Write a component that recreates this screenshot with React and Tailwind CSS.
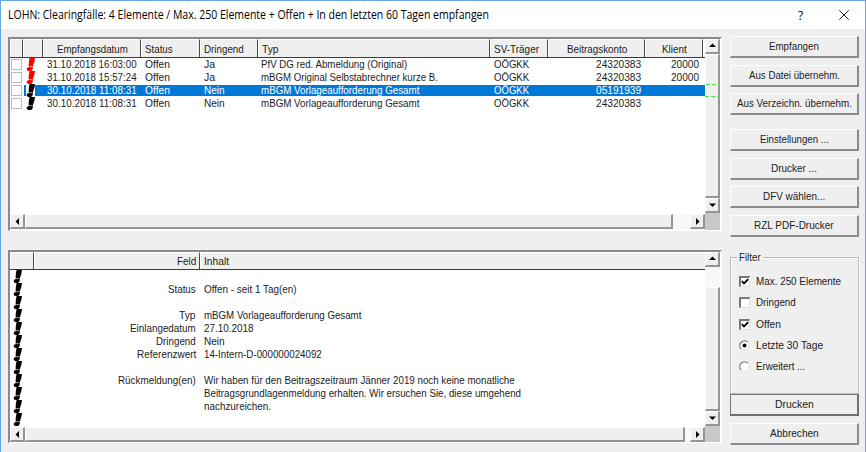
import { useLayoutEffect, useRef } from "react";

// Text run condensed (or widened) so that it fills the given width.
function T({ w, className = "", children }) {
  const ref = useRef(null);
  useLayoutEffect(() => {
    const el = ref.current;
    el.parentElement.style.width = w + "px";
    el.style.transform = `scaleX(${w / el.offsetWidth})`;
  }, [w]);
  return (
    <span className={`inline-flex ${className}`}>
      <span ref={ref} className="shrink-0 origin-left whitespace-pre">
        {children}
      </span>
    </span>
  );
}

const raised =
  "border-t border-l border-t-white border-l-white border-r-2 border-b-2 border-r-[#959595] border-b-[#959595] bg-[#efefef]";

const arrows = {
  up: "M4 8h7L7.5 4.5z",
  down: "M4 5.5h7L7.5 9z",
  left: "M9 4v7L5.5 7.5z",
  right: "M6 4v7L9.5 7.5z",
};

function Arrow({ dir }) {
  return (
    <div className={`h-[15px] w-[15px] shrink-0 ${raised}`}>
      <svg viewBox="0 0 15 15" className="-mt-px -ml-px block h-[15px] w-[15px]">
        <path d={arrows[dir]} fill="#000" />
      </svg>
    </div>
  );
}

function Mark({ color = "#000" }) {
  return (
    <svg viewBox="0 0 10 13" className="block h-[13px] w-[10px] shrink-0 overflow-visible">
      <path d="M3.6 0H9L8.4 3.5L6.8 8.6H2.6L2.8 4Z" fill={color} />
      <ellipse cx="3.6" cy="11" rx="2.9" ry="2" fill={color} />
      <path d="M4.5 9.6L6.8 8.6V11Z" fill={color} />
    </svg>
  );
}

function Head({ className = "", children }) {
  return (
    <div
      className={`flex h-full shrink-0 items-center border-t border-r border-l border-t-white border-l-white border-r-[#4a4a4a] bg-[#efefef] pt-px ${className}`}
    >
      {children}
    </div>
  );
}

const messages = [
  { date: "31.10.2018 16:03:00", dw: 90, status: "Offen", urgent: "Ja", uw: 11, type: "PfV DG red. Abmeldung (Original)", tw: 146, konto: "24320383", klient: "20000", color: "#f00" },
  { date: "31.10.2018 15:57:24", dw: 90, status: "Offen", urgent: "Ja", uw: 11, type: "mBGM Original Selbstabrechner kurze B.", tw: 177, konto: "24320383", klient: "20000", color: "#f00" },
  { date: "30.10.2018 11:08:31", dw: 90, status: "Offen", urgent: "Nein", uw: 21, type: "mBGM Vorlageaufforderung Gesamt", tw: 158, konto: "05191939", klient: "", color: "#000", selected: true },
  { date: "30.10.2018 11:08:31", dw: 90, status: "Offen", urgent: "Nein", uw: 21, type: "mBGM Vorlageaufforderung Gesamt", tw: 158, konto: "24320383", klient: "", color: "#000" },
];

function MessageRow({ m }) {
  return (
    <div className="flex h-[13px] w-[695px] items-center">
      <div className="ml-px h-[11px] w-[11px] shrink-0 border border-[#bdbdbd] bg-white" />
      <div className={`ml-[2px] flex h-[11px] flex-1 items-center ${m.selected ? "bg-[#0078d7] text-white" : ""}`}>
        <div className={`ml-[2px] flex h-[11px] w-[9px] shrink-0 items-center justify-start ${m.selected ? "bg-white" : ""}`}>
          <Mark color={m.color} />
        </div>
        <div className="ml-[12px] flex w-[90px] shrink-0 items-center"><T w={m.dw}>{m.date}</T></div>
        <div className="ml-[8px] flex w-[59px] shrink-0"><T w={25}>{m.status}</T></div>
        <div className="flex w-[57px] shrink-0"><T w={m.uw}>{m.urgent}</T></div>
        <div className="flex w-[233px] shrink-0"><T w={m.tw}>{m.type}</T></div>
        <div className="flex w-[57px] shrink-0"><T w={35}>OÖGKK</T></div>
        <div className="flex w-[90px] shrink-0 justify-end"><T w={45}>{m.konto}</T></div>
        <div className="flex w-[58px] shrink-0 justify-end">{m.klient && <T w={28}>{m.klient}</T>}</div>
      </div>
    </div>
  );
}

function Messages() {
  return (
    <div className="relative flex h-[194px] w-[714px] border-t-2 border-r-2 border-b border-l-2 border-t-[#8a8a8a] border-r-white border-b-white border-l-[#8a8a8a] bg-white">
      <div className="flex w-[695px] flex-col">
        <div className="flex h-[19px] border-b border-[#3c3c3c]">
          <Head className="w-[13px]" />
          <Head className="w-[20px]" />
          <Head className="w-[98px] justify-center"><T w={71}>Empfangsdatum</T></Head>
          <Head className="w-[59px] pl-[3px]"><T w={28}>Status</T></Head>
          <Head className="w-[58px] pl-[3px]"><T w={40}>Dringend</T></Head>
          <Head className="w-[232px] pl-[3px]"><T w={17}>Typ</T></Head>
          <Head className="w-[58px] pl-[3px]"><T w={45}>SV-Träger</T></Head>
          <Head className="w-[97px] justify-center"><T w={60}>Beitragskonto</T></Head>
          <Head className="w-[58px] justify-center"><T w={25}>Klient</T></Head>
        </div>
        <div className="h-[156px]">
          {messages.map((m, i) => <MessageRow key={i} m={m} />)}
        </div>
        <div className="flex h-[16px] bg-[#f8f8f8]">
          <Arrow dir="left" />
          <div className={`h-[15px] w-[648px] ${raised}`} />
          <div className="flex-1" />
          <Arrow dir="right" />
        </div>
      </div>
      <div className="flex w-[15px] flex-col bg-[#f8f8f8]">
        <Arrow dir="up" />
        <div className={`h-[144px] w-[15px] ${raised}`} />
        <Arrow dir="down" />
        <div className="flex-1 bg-[#c8c8c8]" />
      </div>
      <svg viewBox="0 0 15 13" className="absolute top-[45px] left-[695px] h-[13px] w-[15px]">
        <path d="M1 0.5H15M0 12.5H15" stroke="#4be84b" strokeDasharray="4 2" fill="none" />
      </svg>
    </div>
  );
}

const details = [
  ["", 0, "", 0],
  ["Status", 28, "Offen - seit 1 Tag(en)", 93],
  ["", 0, "", 0],
  ["Typ", 17, "mBGM Vorlageaufforderung Gesamt", 157],
  ["Einlangedatum", 66, "27.10.2018", 50],
  ["Dringend", 40, "Nein", 21],
  ["Referenzwert", 59, "14-Intern-D-000000024092", 118],
  ["", 0, "", 0],
  ["Rückmeldung(en)", 78, "Wir haben für den Beitragszeitraum Jänner 2019 noch keine monatliche", 311],
  ["", 0, "Beitragsgrundlagenmeldung erhalten. Wir ersuchen Sie, diese umgehend", 317],
  ["", 0, "nachzureichen.", 67],
  ["", 0, "", 0],
];

function Details() {
  return (
    <div className="flex h-[193px] w-[714px] border-t-2 border-r-2 border-b border-l-2 border-t-[#8a8a8a] border-r-white border-b-white border-l-[#8a8a8a] bg-white">
      <div className="flex w-[695px] flex-col">
        <div className="flex h-[18px] border-b border-[#3c3c3c]">
          <Head className="w-[24px]" />
          <Head className="w-[166px] justify-end pr-[3px]"><T w={19}>Feld</T></Head>
          <Head className="flex-1 border-r-0 pl-[3px]"><T w={25}>Inhalt</T></Head>
        </div>
        <div className="h-[157px]">
          {details.map(([label, lw, value, vw], i) => (
            <div key={i} className="flex h-[13px] items-center">
              <div className="ml-[3px] w-[10px] shrink-0"><Mark /></div>
              <div className="flex w-[173px] shrink-0 justify-end">{label && <T w={lw}>{label}</T>}</div>
              <div className="ml-[8px] flex">{value && <T w={vw}>{value}</T>}</div>
            </div>
          ))}
        </div>
        <div className="flex h-[15px] bg-[#f8f8f8]">
          <Arrow dir="left" />
          <div className={`h-[15px] w-[660px] ${raised}`} />
          <div className="flex-1" />
          <Arrow dir="right" />
        </div>
      </div>
      <div className="flex w-[15px] flex-col bg-[#f8f8f8]">
        <Arrow dir="up" />
        <div className="h-[20px]" />
        <div className={`h-[124px] w-[15px] ${raised}`} />
        <Arrow dir="down" />
        <div className="flex-1 bg-[#c8c8c8]" />
      </div>
    </div>
  );
}

function Button({ w, strong, className = "", children }) {
  return (
    <button
      className={`flex h-[22px] w-[129px] shrink-0 items-center justify-center border-t border-r-2 border-b-2 border-l bg-[#efefef] ${
        strong
          ? "border-t-[#777] border-r-[#707070] border-b-[#707070] border-l-[#777]"
          : "border-t-white border-r-[#8c8c8c] border-b-[#8c8c8c] border-l-white"
      } ${className}`}
    >
      <T w={w}>{children}</T>
    </button>
  );
}

function Check({ on }) {
  return (
    <span className="flex h-[11px] w-[11px] items-center justify-center border-t-2 border-r border-b border-l-2 border-t-[#777] border-r-[#ddd] border-b-[#ddd] border-l-[#777] bg-white">
      {on && (
        <svg viewBox="0 0 8 8" className="h-[8px] w-[8px] shrink-0">
          <path d="M0.8 3.2L3 5.4L7.2 1.2" fill="none" stroke="#000" strokeWidth="1.9" />
        </svg>
      )}
    </span>
  );
}

function Radio({ on }) {
  return (
    <svg viewBox="0 0 11 11" className="h-[11px] w-[11px]">
      <circle cx="5.5" cy="5.5" r="4.6" fill="#fff" stroke="#e2e2e2" />
      <path d="M2.2 8.8A4.6 4.6 0 0 1 8.8 2.2" fill="none" stroke="#777" strokeWidth="1.2" />
      {on && <circle cx="5.5" cy="5.5" r="2" fill="#000" />}
    </svg>
  );
}

function Option({ box, w, children }) {
  return (
    <label className="flex h-[21.25px] items-center gap-[6px]">
      {box}
      <T w={w}>{children}</T>
    </label>
  );
}

export default function App() {
  return (
    <div className="flex h-[452px] w-[866px] flex-col overflow-hidden border-x border-t border-[#66a7e4] bg-[#efefef] font-['Liberation_Sans',Arial,sans-serif] text-[11.5px] leading-[13px] text-[#1c1c1c]">
      <header className="flex h-[28px] shrink-0 items-center bg-white pl-[7px] text-black">
        <T w={481} className="font-['Open_Sans','Noto_Sans',sans-serif] text-[12px] leading-[16px]">
          LOHN: Clearingfälle: 4 Elemente / Max. 250 Elemente + Offen + In den letzten 60 Tagen empfangen
        </T>
        <span className="ml-[309px] w-[8px] font-['Open_Sans','Noto_Sans',sans-serif] text-[12px]">?</span>
        <svg viewBox="0 0 10 10" className="ml-[33px] h-[10px] w-[10px]">
          <path d="M0.3 0.3L9.7 9.7M9.7 0.3L0.3 9.7" stroke="#222" strokeWidth="1" fill="none" />
        </svg>
      </header>
      <main className="flex pl-[7px]">
        <div className="flex w-[722px] flex-col pt-[8px]">
          <Messages />
          <div className="h-[19px]" />
          <Details />
        </div>
        <aside className="flex w-[129px] flex-col pt-[7px]">
          <div className="flex flex-col gap-[6.6px]">
            <Button w={50}>Empfangen</Button>
            <Button w={91}>Aus Datei übernehm.</Button>
            <Button w={115}>Aus Verzeichn. übernehm.</Button>
          </div>
          <div className="mt-[14px] flex flex-col gap-[6.6px]">
            <Button w={69}>Einstellungen ...</Button>
            <Button w={46}>Drucker ...</Button>
            <Button w={62}>DFV wählen...</Button>
            <Button w={80}>RZL PDF-Drucker</Button>
          </div>
          <fieldset className="mt-[14px] h-[143px] w-[129px] border border-[#bcbcbc] pl-[8px] shadow-[inset_1px_1px_0_#fff,1px_1px_0_#fff]">
            <legend className="-ml-[2px] px-[2px]"><T w={22}>Filter</T></legend>
            <div className="mt-[7px] flex flex-col">
              <Option box={<Check on />} w={85}>Max. 250 Elemente</Option>
              <Option box={<Check />} w={40}>Dringend</Option>
              <Option box={<Check on />} w={25}>Offen</Option>
              <Option box={<Radio on />} w={67}>Letzte 30 Tage</Option>
              <Option box={<Radio />} w={49}>Erweitert ...</Option>
            </div>
          </fieldset>
          <Button w={39} strong className="mt-[0.5px]">Drucken</Button>
          <Button w={49} className="mt-[6.5px]">Abbrechen</Button>
        </aside>
      </main>
    </div>
  );
}
